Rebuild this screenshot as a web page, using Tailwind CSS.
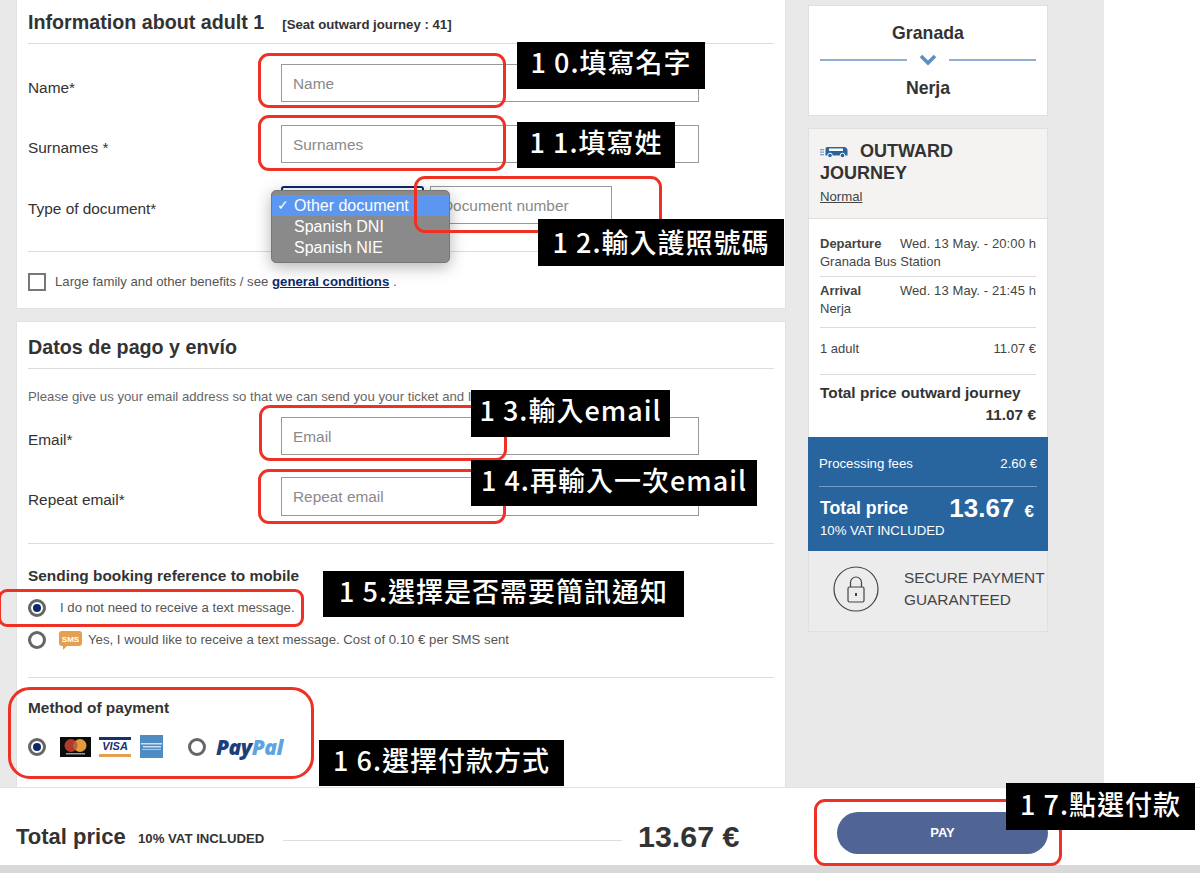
<!DOCTYPE html>
<html>
<head>
<meta charset="utf-8">
<script src="https://cdn.jsdelivr.net/npm/@tailwindcss/browser@4"></script>
</head>
<body class="bg-white">
<div class="relative w-[1200px] h-[873px] overflow-hidden flex flex-col bg-white font-['Liberation_Sans',sans-serif] text-[#333]">
  <div class="h-[787px] w-[1104px] shrink-0 bg-[#e9e9e9] pl-4 flex gap-[22px]">
    <!-- left column -->
    <div class="w-[770px] flex flex-col gap-[12px]">
      <section class="h-[309px] bg-white border-x border-b border-[#e2e2e2] px-[11px] flex flex-col">
        <div class="h-[44px] border-b border-[#ddd] flex items-baseline pt-[9px]">
          <h2 class="text-[19.7px] leading-[26px] font-bold">Information about adult 1</h2>
          <span class="ml-[18px] text-[13.2px] font-bold">[Seat outward journey : 41]</span>
        </div>
        <div class="h-[38px] mt-[20px] flex items-center"><span class="w-[253px] text-[15.4px] pt-[9px]">Name*</span><div class="w-[418px] h-[38px] border border-[#999] pl-[11px] pt-[1px] flex items-center text-[15.4px] text-[#8a8a8a]">Name</div></div>
        <div class="h-[38px] mt-[23px] flex items-center"><span class="w-[253px] text-[15.4px] pt-[8px]">Surnames *</span><div class="w-[418px] h-[38px] border border-[#999] pl-[11px] pt-[1px] flex items-center text-[15.4px] text-[#8a8a8a]">Surnames</div></div>
        <div class="h-[38px] mt-[23px] flex items-center"><span class="w-[253px] text-[15.4px] pt-[7px]">Type of document*</span><div class="w-[143px] h-[38px] border-2 border-[#0b2a6b] rounded-[3px]"></div><div class="ml-[6px] w-[182px] h-[38px] border border-[#999] pl-[11px] pt-[1px] flex items-center text-[15.4px] text-[#8a8a8a] whitespace-nowrap">Document number</div></div>
        <div class="mt-[27px] border-t border-[#ddd]"></div>
        <div class="mt-[20px] flex items-center"><span class="w-[18px] h-[18px] border-2 border-[#777] shrink-0"></span><span class="ml-[9px] text-[13.2px] text-[#555]">Large family and other benefits / see <a class="font-bold underline text-[#0b2a6b]">general conditions</a> .</span></div>
      </section>
      <section class="flex-1 bg-white border-x border-t border-[#e2e2e2] px-[11px] flex flex-col">
        <div class="h-[47px] border-b border-[#ddd] pt-[13px]"><h2 class="text-[19.7px] leading-[24px] font-bold">Datos de pago y envío</h2></div>
        <p class="mt-[20px] text-[13.2px] leading-[16px] text-[#666]">Please give us your email address so that we can send you your ticket and I</p>
        <div class="h-[38px] mt-[12px] flex items-center"><span class="w-[253px] text-[15.4px] pt-[7px]">Email*</span><div class="w-[418px] h-[38px] border border-[#999] pl-[11px] pt-[1px] flex items-center text-[15.4px] text-[#8a8a8a]">Email</div></div>
        <div class="h-[39px] mt-[22px] flex items-center"><span class="w-[253px] text-[15.4px] pt-[7px]">Repeat email*</span><div class="w-[418px] h-[39px] border border-[#999] pl-[11px] pt-[1px] flex items-center text-[15.4px] text-[#8a8a8a]">Repeat email</div></div>
        <div class="mt-[27px] border-t border-[#ddd]"></div>
        <h3 class="mt-[24px] text-[15.4px] leading-[16px] font-bold">Sending booking reference to mobile</h3>
        <div class="mt-[15px] h-[18px] flex items-center"><span class="w-[18px] h-[18px] rounded-full border-[3px] border-[#666] flex items-center justify-center shrink-0"><span class="w-[8px] h-[8px] rounded-full bg-[#0b2a6b]"></span></span><span class="ml-[14px] text-[13.2px] text-[#555]">I do not need to receive a text message.</span></div>
        <div class="mt-[14px] h-[18px] flex items-center"><span class="w-[18px] h-[18px] rounded-full border-[3px] border-[#666] shrink-0"></span>
          <svg class="ml-[12px] shrink-0" width="25" height="21" viewBox="0 0 25 21"><path d="M4 1h17a3 3 0 0 1 3 3v9a3 3 0 0 1-3 3H9l-4 4v-4H4a3 3 0 0 1-3-3V4a3 3 0 0 1 3-3z" fill="#e59f4f"/><text x="12.5" y="11.5" text-anchor="middle" font-family="Liberation Sans" font-size="8" font-weight="700" fill="#fff">SMS</text></svg>
          <span class="ml-[5px] text-[13.2px] text-[#555]">Yes, I would like to receive a text message. Cost of 0.10 € per SMS sent</span></div>
        <div class="mt-[28px] border-t border-[#ddd]"></div>
        <h3 class="mt-[22px] text-[15.4px] leading-[16px] font-bold">Method of payment</h3>
        <div class="mt-[19px] flex items-center"><span class="w-[18px] h-[18px] rounded-full border-[3px] border-[#666] flex items-center justify-center shrink-0"><span class="w-[8px] h-[8px] rounded-full bg-[#0b2a6b]"></span></span>
          <svg class="ml-[14px] shrink-0" width="31" height="20" viewBox="0 0 31 20"><rect width="31" height="20" fill="#0c0c0c"/><circle cx="11" cy="8.5" r="6.5" fill="#b23a2c"/><circle cx="20" cy="8.5" r="6.5" fill="#e59a3a"/><path d="M15.5 3.8a6.5 6.5 0 0 1 0 9.4a6.5 6.5 0 0 1 0-9.4z" fill="#b8643a"/><rect x="6" y="16" width="19" height="1.5" fill="#999"/></svg>
          <span class="ml-[8px] w-[32px] h-[20px] shrink-0 flex flex-col justify-between bg-white"><span class="h-[3px] bg-[#1a2f6e]"></span><span class="text-[11px] leading-[11px] font-bold italic text-center text-[#1a2f6e]">VISA</span><span class="h-[3px] bg-[#e59f4f]"></span></span>
          <svg class="ml-[9px] shrink-0" width="23" height="23" viewBox="0 0 23 23"><rect width="23" height="23" fill="#4f8cc4"/><rect x="1" y="8" width="21" height="1.5" fill="#cfe0f0"/><rect x="3" y="11" width="18" height="1.5" fill="#cfe0f0"/><rect x="2" y="14" width="19" height="1" fill="#a9c8e4"/></svg>
          <span class="ml-[25px] w-[18px] h-[18px] rounded-full border-[3px] border-[#666] shrink-0"></span>
          <span class="ml-[10px] text-[21px] leading-[20px] font-extrabold italic font-['Open_Sans',sans-serif] tracking-[-0.5px]"><span class="text-[#1c3f7c]">Pay</span><span class="text-[#5fa3df]">Pal</span></span>
        </div>
      </section>
    </div>
    <!-- right column -->
    <aside class="w-[240px] pt-[5px] flex flex-col gap-[12px]">
      <div class="h-[111px] bg-white border border-[#e0e0e0] px-[11px] pt-[17px] flex flex-col items-center">
        <div class="text-[17.7px] leading-[20px] font-bold">Granada</div>
        <div class="w-full mt-[10px] h-[14px] flex items-center gap-[12px]">
          <span class="flex-1 h-[2px] bg-[#8fb0d4]"></span>
          <svg width="18" height="13" viewBox="0 0 18 13"><path d="M2 2l7 7 7-7" fill="none" stroke="#5b8fc0" stroke-width="3.5"/></svg>
          <span class="flex-1 h-[2px] bg-[#8fb0d4]"></span>
        </div>
        <div class="mt-[11px] text-[17.7px] leading-[20px] font-bold">Nerja</div>
      </div>
      <div class="h-[504px] border border-[#e0e0e0] flex flex-col">
        <div class="h-[90px] shrink-0 bg-[#f4f3f2] border-b border-[#e0e0e0] px-[11px] pt-[11px]">
          <div class="text-[18px] leading-[22px] font-bold"><svg class="inline-block align-[-1px] mr-[12px]" width="28" height="11" viewBox="0 0 28 11"><rect x="0" y="2" width="4" height="1.3" fill="#7aa3cc"/><rect x="0" y="4.5" width="4" height="1.3" fill="#7aa3cc"/><rect x="0" y="7" width="4" height="1.3" fill="#7aa3cc"/><path d="M7 0h17a3.5 3.5 0 0 1 3.5 4v4.5h-22V2a2 2 0 0 1 1.5-2z" fill="#2a659e"/><rect x="9" y="1.5" width="14" height="2.5" fill="#fff"/><circle cx="10" cy="8.5" r="2.3" fill="#2a659e" stroke="#fff"/><circle cx="22.5" cy="8.5" r="2.3" fill="#2a659e" stroke="#fff"/></svg>OUTWARD<br>JOURNEY</div>
          <div class="mt-[5px] text-[13.2px] leading-[16px] underline text-[#444]">Normal</div>
        </div>
        <div class="h-[218px] shrink-0 bg-white px-[11px] text-[13px] text-[#444]">
          <div class="h-[58px] border-b border-[#ddd] pt-[16px] leading-[18px]">
            <div class="flex justify-between"><b>Departure</b><span class="tracking-[0.1px]">Wed. 13 May. - 20:00 h</span></div>
            <div>Granada Bus Station</div>
          </div>
          <div class="h-[51px] border-b border-[#ddd] pt-[5px] leading-[18px]">
            <div class="flex justify-between"><b>Arrival</b><span class="tracking-[0.1px]">Wed. 13 May. - 21:45 h</span></div>
            <div>Nerja</div>
          </div>
          <div class="h-[47px] border-b border-[#ddd] flex justify-between items-center pb-[4px]"><span>1 adult</span><span>11.07 €</span></div>
          <div class="mt-[7px] text-[15.4px] leading-[22px] font-bold text-[#333]">Total price outward journey</div>
          <div class="text-right text-[15.4px] leading-[22px] font-bold text-[#333]">11.07 €</div>
        </div>
        <div class="h-[114px] shrink-0 bg-[#28659e] text-white px-[11px] pt-[19px] -mx-px">
          <div class="flex justify-between text-[13.2px] leading-[16px] border-b border-[#6f9bc4] h-[31px]"><span>Processing fees</span><span>2.60 €</span></div>
          <div class="mt-[8px] flex justify-between items-start">
            <span class="text-[17.7px] leading-[24px] font-bold mt-[1px] ml-[1px]">Total price</span>
            <span class="font-bold text-[26px] leading-[26px] pr-[3px]">13.67 <span class="text-[17px] ml-[3px]">€</span></span>
          </div>
          <div class="text-[13.2px] leading-[16px] -mt-[2px] ml-[1px]">10% VAT INCLUDED</div>
        </div>
        <div class="flex-1 bg-[#ececec] flex items-center pb-[5px]">
          <svg class="ml-[24px] shrink-0" width="46" height="46" viewBox="0 0 46 46" fill="none" stroke="#444"><circle cx="23" cy="23" r="22" stroke-width="1.2"/><rect x="15" y="21" width="16" height="15" rx="1.5" stroke-width="1.2"/><path d="M17.5 21v-4.5a5.5 5.5 0 0 1 11 0V21" stroke-width="1.2"/><path d="M23 27v3" stroke-width="2"/></svg>
          <div class="ml-[25px] text-[15.4px] leading-[22px] text-[#444] whitespace-nowrap">SECURE PAYMENT<br>GUARANTEED</div>
        </div>
      </div>
    </aside>
  </div>
  <!-- bottom bar -->
  <div class="h-[78px] shrink-0 border-t border-[#e2e2e2] bg-white pl-4 flex items-center">
    <span class="w-[109px] text-[22px] font-bold pt-[20px] whitespace-nowrap">Total price</span>
    <span class="ml-[13px] w-[126px] text-[13.2px] font-bold pt-[24px] whitespace-nowrap">10% VAT INCLUDED</span>
    <span class="ml-[19px] w-[339px] border-t border-[#ddd] mt-[28px]"></span>
    <span class="ml-[16px] w-[110px] text-[30.4px] font-bold pt-[20px] whitespace-nowrap">13.67 €</span>
    <span class="ml-[89px] w-[211px] h-[42px] mt-[12px] rounded-[21px] bg-[#506595] text-white text-[13px] font-bold flex items-center justify-center">PAY</span>
  </div>
  <div class="flex-1 bg-[#d9d9d9]"></div>

  <!-- dropdown menu overlay -->
  <div class="absolute left-[271px] top-[190px] w-[179px] h-[73px] rounded-[5px] bg-[#8a8a8a] border border-[#777] pt-[4px] text-white text-[16px] leading-[21px] shadow-[0_4px_16px_rgba(0,0,0,0.3)]">
    <div class="h-[21px] bg-[#5b96f0] pl-[22px] relative"><span class="absolute left-[5px] top-0 text-[14px]">✓</span>Other document</div>
    <div class="pl-[22px]">Spanish DNI</div>
    <div class="pl-[22px]">Spanish NIE</div>
  </div>

  <!-- red annotation frames -->
  <div class="absolute left-[258px] top-[53px] w-[248px] h-[55px] border-[3.5px] border-[#ee3124] rounded-[11px]"></div>
  <div class="absolute left-[258px] top-[115px] w-[248px] h-[56px] border-[3.5px] border-[#ee3124] rounded-[11px]"></div>
  <div class="absolute left-[414px] top-[176px] w-[248px] h-[57px] border-[3.5px] border-[#ee3124] rounded-[11px]"></div>
  <div class="absolute left-[259px] top-[405px] w-[248px] h-[56px] border-[3.5px] border-[#ee3124] rounded-[11px]"></div>
  <div class="absolute left-[258px] top-[469px] w-[248px] h-[55px] border-[3.5px] border-[#ee3124] rounded-[11px]"></div>
  <div class="absolute left-[-2px] top-[589px] w-[306px] h-[38px] border-[3.5px] border-[#ee3124] rounded-[9px]"></div>
  <div class="absolute left-[8px] top-[687px] w-[306px] h-[92px] border-[3.5px] border-[#ee3124] rounded-[22px]"></div>
  <div class="absolute left-[814px] top-[799px] w-[248px] h-[67px] border-[3.5px] border-[#ee3124] rounded-[11px]"></div>

  <!-- black labels -->
  <div class="absolute left-[517px] top-[42px] w-[188px] h-[47px] pb-[6px] bg-black text-white flex items-center justify-center whitespace-nowrap font-['Noto_Sans_CJK_TC',sans-serif] text-[27px] font-medium tracking-[1px]"><span>1 0.填寫名字</span></div>
  <div class="absolute left-[517px] top-[122px] w-[158px] h-[46px] pb-[5px] bg-black text-white flex items-center justify-center whitespace-nowrap font-['Noto_Sans_CJK_TC',sans-serif] text-[27px] font-medium tracking-[1px]"><span>1 1.填寫姓</span></div>
  <div class="absolute left-[538px] top-[219px] w-[246px] h-[47px] bg-black text-white flex items-center justify-center whitespace-nowrap font-['Noto_Sans_CJK_TC',sans-serif] text-[27px] font-medium tracking-[1px]"><span>1 2.輸入護照號碼</span></div>
  <div class="absolute left-[471px] top-[390px] w-[199px] h-[47px] pb-[6px] bg-black text-white flex items-center justify-center whitespace-nowrap font-['Noto_Sans_CJK_TC',sans-serif] text-[27px] font-medium tracking-[1px]"><span>1 3.輸入email</span></div>
  <div class="absolute left-[471px] top-[460px] w-[286px] h-[46px] pb-[6px] bg-black text-white flex items-center justify-center whitespace-nowrap font-['Noto_Sans_CJK_TC',sans-serif] text-[27px] font-medium tracking-[1px]"><span>1 4.再輸入一次email</span></div>
  <div class="absolute left-[323px] top-[571px] w-[361px] h-[46px] pb-[5px] bg-black text-white flex items-center justify-center whitespace-nowrap font-['Noto_Sans_CJK_TC',sans-serif] text-[27px] font-medium tracking-[1px]"><span>1 5.選擇是否需要簡訊通知</span></div>
  <div class="absolute left-[319px] top-[740px] w-[245px] h-[46px] pb-[5px] bg-black text-white flex items-center justify-center whitespace-nowrap font-['Noto_Sans_CJK_TC',sans-serif] text-[27px] font-medium tracking-[1px]"><span>1 6.選擇付款方式</span></div>
  <div class="absolute left-[1006px] top-[783px] w-[189px] h-[47px] pb-[5px] bg-black text-white flex items-center justify-center whitespace-nowrap font-['Noto_Sans_CJK_TC',sans-serif] text-[27px] font-medium tracking-[1px]"><span>1 7.點選付款</span></div>
</div>
</body>
</html>
